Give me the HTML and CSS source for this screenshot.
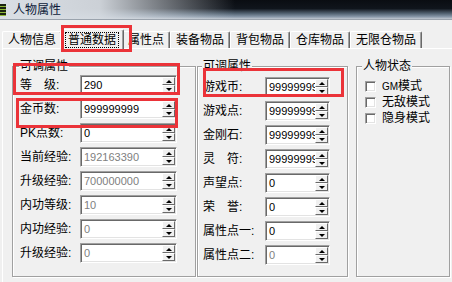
FILE: index.html
```html
<!DOCTYPE html>
<html lang="zh-CN">
<head>
    <meta charset="UTF-8">
    <title>人物属性</title>
    <link rel="stylesheet" href="styles.css">
</head>
<body>
    <div class="titlebar">
        <span class="app-icon"></span>
        <span class="title">人物属性</span>
    </div>

    <div class="tabs">
        <div class="tab">人物信息</div>
        <div class="tab active"><span class="focus">普通数据</span></div>
        <div class="tab">属性点</div>
        <div class="tab">装备物品</div>
        <div class="tab">背包物品</div>
        <div class="tab">仓库物品</div>
        <div class="tab">无限仓物品</div>
    </div>

    <div class="page">
        <fieldset class="group group-main">
            <legend>可调属性</legend>
            <div class="row"><label>等　级:</label><div class="spin"><span class="val">290</span><span class="arrows"><i class="up"></i><i class="down"></i></span></div></div>
            <div class="row"><label>金币数:</label><div class="spin"><span class="val">999999999</span><span class="arrows"><i class="up"></i><i class="down"></i></span></div></div>
            <div class="row"><label>PK点数:</label><div class="spin"><span class="val">0</span><span class="arrows"><i class="up"></i><i class="down"></i></span></div></div>
            <div class="row"><label>当前经验:</label><div class="spin"><span class="val dim">192163390</span><span class="arrows"><i class="up"></i><i class="down"></i></span></div></div>
            <div class="row"><label>升级经验:</label><div class="spin"><span class="val dim">700000000</span><span class="arrows"><i class="up"></i><i class="down"></i></span></div></div>
            <div class="row"><label>内功等级:</label><div class="spin"><span class="val dim">10</span><span class="arrows"><i class="up"></i><i class="down"></i></span></div></div>
            <div class="row"><label>内功经验:</label><div class="spin"><span class="val dim">0</span><span class="arrows"><i class="up"></i><i class="down"></i></span></div></div>
            <div class="row"><label>升级经验:</label><div class="spin"><span class="val dim">0</span><span class="arrows"><i class="up"></i><i class="down"></i></span></div></div>
        </fieldset>

        <fieldset class="group group-extra">
            <legend>可调属性</legend>
            <div class="row"><label>游戏币:</label><div class="spin"><span class="val">999999999</span><span class="arrows"><i class="up"></i><i class="down"></i></span></div></div>
            <div class="row"><label>游戏点:</label><div class="spin"><span class="val">999999999</span><span class="arrows"><i class="up"></i><i class="down"></i></span></div></div>
            <div class="row"><label>金刚石:</label><div class="spin"><span class="val">999999999</span><span class="arrows"><i class="up"></i><i class="down"></i></span></div></div>
            <div class="row"><label>灵　符:</label><div class="spin"><span class="val">999999999</span><span class="arrows"><i class="up"></i><i class="down"></i></span></div></div>
            <div class="row"><label>声望点:</label><div class="spin"><span class="val">0</span><span class="arrows"><i class="up"></i><i class="down"></i></span></div></div>
            <div class="row"><label>荣　誉:</label><div class="spin"><span class="val">0</span><span class="arrows"><i class="up"></i><i class="down"></i></span></div></div>
            <div class="row"><label>属性点一:</label><div class="spin"><span class="val">0</span><span class="arrows"><i class="up"></i><i class="down"></i></span></div></div>
            <div class="row"><label>属性点二:</label><div class="spin"><span class="val dim">0</span><span class="arrows"><i class="up"></i><i class="down"></i></span></div></div>
        </fieldset>

        <fieldset class="group group-state">
            <legend>人物状态</legend>
            <div class="check"><span class="box"></span><span><small>GM</small>模式</span></div>
            <div class="check"><span class="box"></span><span>无敌模式</span></div>
            <div class="check"><span class="box"></span><span>隐身模式</span></div>
        </fieldset>
    </div>

    <!-- red annotation frames -->
    <div class="mark mark-tab"></div>
    <div class="mark mark-level"></div>
    <div class="mark mark-gold"></div>
    <div class="mark mark-coin"></div>
</body>
</html>
```

FILE: styles.css
```css
:root {
    --face: #f0f0f0;
    --shadow: #a0a0a0;
    --dark: #696969;
    --light: #e3e3e3;
    --mark: #eb3339;
}

* {
    margin: 0;
    padding: 0;
    box-sizing: border-box;
}

body {
    width: 452px;
    height: 282px;
    overflow: hidden;
    position: relative;
    background: var(--face);
    color: #000;
    font: 12px/14px "Liberation Sans", "Noto Sans CJK SC", sans-serif;
}

/* title bar (blurred glass) */
.titlebar {
    height: 20px;
    display: flex;
    align-items: center;
    gap: 7px;
    border-bottom: 1px solid #9aa3ad;
    background:
        linear-gradient(to right, rgba(218,223,229,1) 0%, rgba(214,219,225,0.95) 22%, rgba(214,219,225,0) 52%),
        linear-gradient(to bottom, #0a0d12 0%, #10151c 45%, #50606f 70%, #8797a8 88%, #c1c9d2 100%);
}

.app-icon {
    width: 6px;
    height: 12px;
    background: repeating-linear-gradient(to bottom, #1b2410 0 2px, #8fb83a 2px 3px);
}

.title {
    color: #0d1a38;
    font-size: 12px;
    line-height: 14px;
}

/* tabs */
.tabs {
    height: 28px;
    display: flex;
    align-items: flex-end;
    padding-left: 2px;
}

.tab {
    height: 17px;
    padding: 0 5px;
    line-height: 16px;
    border-top: 1px solid #fff;
    border-left: 1px solid #fff;
    border-right: 1px solid var(--dark);
    box-shadow: inset -1px 0 var(--shadow);
    border-radius: 2px 2px 0 0;
    white-space: nowrap;
}

.tab.active {
    height: 20px;
    margin: 0 -2px -1px;
    padding: 2px 4px 0;
    position: relative;
    z-index: 1;
    background: var(--face);
}

.focus {
    display: block;
    padding: 0 2px;
    line-height: 14px;
    border: 1px dotted #000;
}

/* tab page */
.page {
    height: 234px;
    margin-left: 2px;
    border-top: 1px solid #fff;
    border-left: 1px solid #fff;
    display: flex;
    padding: 11px 0 5px 9px;
}

.group {
    border: 1px solid var(--shadow);
    box-shadow: inset 1px 1px #fff, 1px 1px #fff;
}

.group legend {
    padding: 0 1px;
    margin-left: -1px;
    line-height: 12px;
    background: var(--face);
}

.group-main {
    width: 184px;
    padding: 1px 0 0 7px;
}

.group-extra {
    width: 151px;
    margin-left: 1px;
    padding: 3px 0 0 5px;
}

.group-state {
    width: 94px;
    margin-left: 8px;
    padding: 6px 0 0 8px;
}

.group-state legend {
    margin-left: -3px;
}

/* spin edit rows */
.row {
    height: 24px;
    display: flex;
    align-items: center;
}

.row label {
    width: 60px;
    white-space: nowrap;
}

.group-extra .row label {
    width: 62px;
}

.spin {
    width: 97px;
    height: 20px;
    display: flex;
    padding: 1px;
    background: #fff;
    border-top: 1px solid var(--shadow);
    border-left: 1px solid var(--shadow);
    border-right: 1px solid #fff;
    border-bottom: 1px solid #fff;
    box-shadow: inset 1px 1px var(--dark), inset -1px -1px var(--light);
}

.group-extra .spin {
    width: 65px;
}

.val {
    flex: 1;
    overflow: hidden;
    white-space: nowrap;
    padding: 0 0 0 2px;
    font: 11px/16px "Liberation Sans", sans-serif;
}

.val.dim {
    color: #808080;
}

.arrows {
    width: 13px;
    display: flex;
    flex-direction: column;
}

.arrows i {
    flex: 1;
    display: flex;
    align-items: center;
    justify-content: center;
    background: var(--face);
    border-top: 1px solid #fff;
    border-left: 1px solid #fff;
    border-right: 1px solid var(--dark);
    border-bottom: 1px solid var(--dark);
}

.arrows i::before {
    content: '';
    border-left: 3px solid transparent;
    border-right: 3px solid transparent;
}

.arrows .up::before {
    border-bottom: 3px solid #000;
}

.arrows .down::before {
    border-top: 3px solid #000;
}

/* check boxes */
.check {
    height: 16px;
    display: flex;
    align-items: center;
    gap: 6px;
    white-space: nowrap;
}

.box {
    width: 11px;
    height: 11px;
    background: #fff;
    border-top: 1px solid var(--shadow);
    border-left: 1px solid var(--shadow);
    border-right: 1px solid #fff;
    border-bottom: 1px solid #fff;
    box-shadow: inset 1px 1px var(--dark), inset -1px -1px var(--light);
}

.check small {
    font-size: 10px;
}

/* annotation frames drawn over the dialog */
.mark {
    position: absolute;
    border: 3px solid var(--mark);
    z-index: 2;
}

.mark-tab {
    left: 61px;
    top: 25px;
    width: 71px;
    height: 27px;
}

.mark-level {
    left: 13px;
    top: 63px;
    width: 167px;
    height: 32px;
}

.mark-gold {
    left: 16px;
    top: 98px;
    width: 162px;
    height: 30px;
}

.mark-coin {
    left: 203px;
    top: 68px;
    width: 141px;
    height: 29px;
}
```
